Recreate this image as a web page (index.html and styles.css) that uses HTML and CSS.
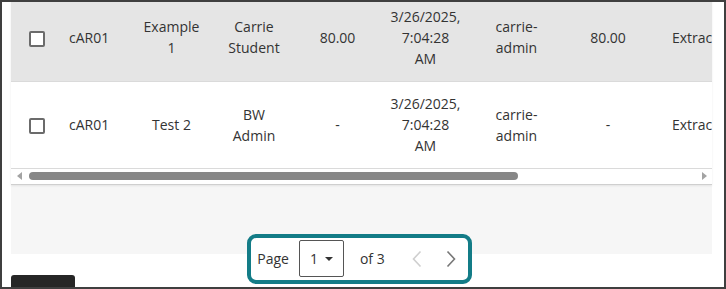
FILE: index.html
```html
<!DOCTYPE html>
<html lang="en">
<head>
    <meta charset="UTF-8">
    <meta name="viewport" content="width=device-width, initial-scale=1.0">
    <title>Attempts</title>
    <link rel="stylesheet" href="styles.css">
</head>
<body>
    <div class="frame">
        <div class="panel">
            <div class="grid">
                <table class="attempts">
                    <colgroup>
                        <col class="c-check">
                        <col class="c-id">
                        <col class="c-name">
                        <col class="c-user">
                        <col class="c-score">
                        <col class="c-date">
                        <col class="c-by">
                        <col class="c-score2">
                        <col class="c-status">
                    </colgroup>
                    <tr class="row-selected">
                        <td><span class="checkbox"></span></td>
                        <td class="id">cAR01</td>
                        <td>Example 1</td>
                        <td>Carrie Student</td>
                        <td>80.00</td>
                        <td>3/26/2025, 7:04:28 AM</td>
                        <td>carrie-admin</td>
                        <td>80.00</td>
                        <td class="status">Extracted</td>
                    </tr>
                    <tr>
                        <td><span class="checkbox"></span></td>
                        <td class="id">cAR01</td>
                        <td>Test 2</td>
                        <td>BW Admin</td>
                        <td>-</td>
                        <td>3/26/2025, 7:04:28 AM</td>
                        <td>carrie-admin</td>
                        <td>-</td>
                        <td class="status">Extracted</td>
                    </tr>
                </table>
                <div class="scrollbar">
                    <span class="arrow arrow-left"></span>
                    <div class="track"><span class="thumb"></span></div>
                    <span class="arrow arrow-right"></span>
                </div>
            </div>
        </div>
        <div class="footer">
            <button class="dark-btn"></button>
            <div class="pager">
                <span class="pager-label">Page</span>
                <div class="page-select">
                    <span>1</span>
                    <span class="caret"></span>
                </div>
                <span class="pager-label of">of 3</span>
                <button class="nav-btn prev" disabled>
                    <svg width="10" height="18" viewBox="0 0 10 18"><path d="M8.5 1.5 L1.5 9 L8.5 16.5" fill="none" stroke="#cfcfcf" stroke-width="1.6"/></svg>
                </button>
                <button class="nav-btn">
                    <svg width="10" height="18" viewBox="0 0 10 18"><path d="M1.5 1.5 L8.5 9 L1.5 16.5" fill="none" stroke="#777" stroke-width="1.6"/></svg>
                </button>
            </div>
        </div>
    </div>
</body>
</html>
```

FILE: styles.css
```css
/* Global Styles */
body {
    font-family: "Open Sans", "Liberation Sans", sans-serif;
    font-size: 14px;
    line-height: 21px;
    color: #333;
    background-color: #fff;
    margin: 0;
    padding: 0;
}
.frame {
    width: 726px;
    height: 289px;
    box-sizing: border-box;
    border: 2px solid #3f3f3f;
    padding: 0 12px 0 9px;
    overflow: hidden;
    background-color: #fff;
}
.panel {
    margin-top: -8px;
    height: 260px;
    background-color: #f6f6f6;
}
.grid {
    background-color: #fff;
    overflow: hidden;
    border-bottom: 1px solid #cfcfcf;
    box-shadow: 0 1px 2px rgba(0, 0, 0, 0.08);
}
.attempts {
    table-layout: fixed;
    width: 793px;
    border-collapse: collapse;
}
.c-check { width: 51px; }
.c-id { width: 68px; }
.c-name { width: 83px; }
.c-user { width: 82px; }
.c-score { width: 85px; }
.c-date { width: 91px; }
.c-by { width: 91px; }
.c-score2 { width: 92px; }
.c-status { width: 150px; }
.attempts td {
    height: 87px;
    box-sizing: border-box;
    padding: 0 10px;
    text-align: center;
    vertical-align: middle;
    border-bottom: 1px solid #dadada;
}
.row-selected td {
    background-color: #e5e5e5;
}
.attempts td.id {
    text-align: left;
    padding-left: 7px;
}
.attempts td.status {
    text-align: left;
    padding-left: 18px;
    white-space: nowrap;
}
.checkbox {
    display: inline-block;
    width: 16px;
    height: 16px;
    box-sizing: border-box;
    border: 2px solid #6b6b6b;
    border-radius: 2px;
    background-color: #fff;
    vertical-align: middle;
}
.scrollbar {
    display: flex;
    align-items: center;
    height: 15px;
    padding: 0 4px;
}
.arrow {
    width: 0;
    height: 0;
    border-top: 4px solid transparent;
    border-bottom: 4px solid transparent;
}
.arrow-left {
    border-right: 5px solid #a3a3a3;
    margin-left: 2px;
}
.arrow-right {
    border-left: 5px solid #a3a3a3;
    margin-right: 1px;
}
.track {
    flex: 1;
    padding: 0 7px;
}
.thumb {
    display: block;
    width: 489px;
    height: 8px;
    border-radius: 4px;
    background-color: #878787;
}
.footer {
    display: grid;
    grid-template-columns: 1fr auto 1fr;
    margin-top: -20px;
    padding-right: 4px;
}
.dark-btn {
    grid-column: 1;
    grid-row: 1;
    justify-self: start;
    width: 64px;
    height: 32px;
    margin-top: 41px;
    border: none;
    border-radius: 3px;
    background-color: #262626;
}
.pager {
    grid-column: 2;
    grid-row: 1;
    display: flex;
    align-items: center;
    height: 50px;
    box-sizing: border-box;
    padding: 0 0 1px 6px;
    border: 4px solid #137c87;
    border-radius: 9px;
    background-color: #fff;
}
.pager-label {
    color: #333;
}
.page-select {
    display: flex;
    align-items: center;
    gap: 7px;
    width: 45px;
    height: 37px;
    box-sizing: border-box;
    margin-left: 10px;
    padding: 0 0 0 10px;
    border: 1px solid #555;
    border-radius: 2px;
}
.caret {
    width: 0;
    height: 0;
    border-left: 4px solid transparent;
    border-right: 4px solid transparent;
    border-top: 4px solid #333;
}
.of {
    margin-left: 16px;
}
.nav-btn {
    display: flex;
    align-items: center;
    justify-content: center;
    width: 34px;
    height: 36px;
    padding: 0;
    border: none;
    background: none;
}
.nav-btn.prev {
    margin-left: 15px;
}
```
